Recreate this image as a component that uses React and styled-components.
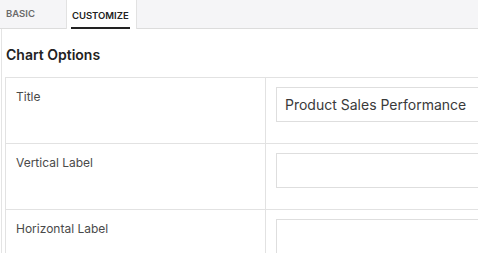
import React from 'react'
import styled, { createGlobalStyle } from 'styled-components'

const Global = createGlobalStyle`
  html, body {
    margin: 0;
    padding: 0;
    background: #fff;
    overflow: hidden;
    font-family: Inter, "Noto Sans", sans-serif;
  }
`;

const TabBar = styled.div`
  display: flex;
  height: 28px;
  background: #f5f5f7;
  border-bottom: 1px solid #dcdcdc;
`;

const Tab = styled.div`
  display: flex;
  align-items: center;
  padding: ${p => (p.active ? '2px 6px 0 4px' : '0 5px 3px 5px')};
  margin-bottom: -1px;
  margin-left: ${p => (p.active ? '25px' : '0')};
  font-size: 9.5px;
  font-weight: 600;
  color: ${p => (p.active ? '#222' : '#6a6a6a')};
  background: ${p => (p.active ? '#fff' : 'transparent')};
  border-left: 1px solid ${p => (p.active ? '#e2e2e2' : 'transparent')};
  border-right: 1px solid ${p => (p.active ? '#e2e2e2' : 'transparent')};
`;

const TabLabel = styled.span`
  display: flex;
  align-items: center;
  height: 100%;
  padding: 2px 1px 0;
  box-sizing: border-box;
  border-bottom: 2px solid #222;
`;

const Panel = styled.div`
  margin-left: 1px;
  border-left: 1px solid #e4e4e4;
  padding: 17px 0 0 3px;
  height: 224px;
`;

const Heading = styled.h2`
  margin: 0 0 0 1px;
  font-size: 14px;
  font-weight: 600;
  line-height: 18px;
  color: #222;
`;

const Table = styled.div`
  margin-top: 13px;
  width: 560px;
  border-top: 1px solid #e2e2e2;
  border-left: 1px solid #e2e2e2;
`;

const Row = styled.div`
  display: grid;
  grid-template-columns: 260px 1fr;
  height: 66px;
  border-bottom: 1px solid #e2e2e2;
  box-sizing: border-box;
`;

const LabelCell = styled.div`
  padding: 11px 10px;
  font-size: 12px;
  line-height: 15px;
  color: #4a4a4a;
  border-right: 1px solid #e2e2e2;
`;

const InputCell = styled.div`
  padding: 9px 10px;
`;

const Input = styled.input`
  width: 100%;
  height: 35px;
  box-sizing: border-box;
  border: 1px solid #dedede;
  border-radius: 0;
  padding: 0 8px;
  font-family: Inter, "Noto Sans", sans-serif;
  font-size: 14px;
  color: #3a3a3a;
  outline: none;
`;

const fields = [
  { label: 'Title', value: 'Product Sales Performance' },
  { label: 'Vertical Label', value: '' },
  { label: 'Horizontal Label', value: '' },
];

export default function App() {
  return (
    <>
      <Global />
      <TabBar>
        <Tab>BASIC</Tab>
        <Tab active>
          <TabLabel>CUSTOMIZE</TabLabel>
        </Tab>
      </TabBar>
      <Panel>
        <Heading>Chart Options</Heading>
        <Table>
          {fields.map(f => (
            <Row key={f.label}>
              <LabelCell>{f.label}</LabelCell>
              <InputCell>
                <Input defaultValue={f.value} />
              </InputCell>
            </Row>
          ))}
        </Table>
      </Panel>
    </>
  )
}
